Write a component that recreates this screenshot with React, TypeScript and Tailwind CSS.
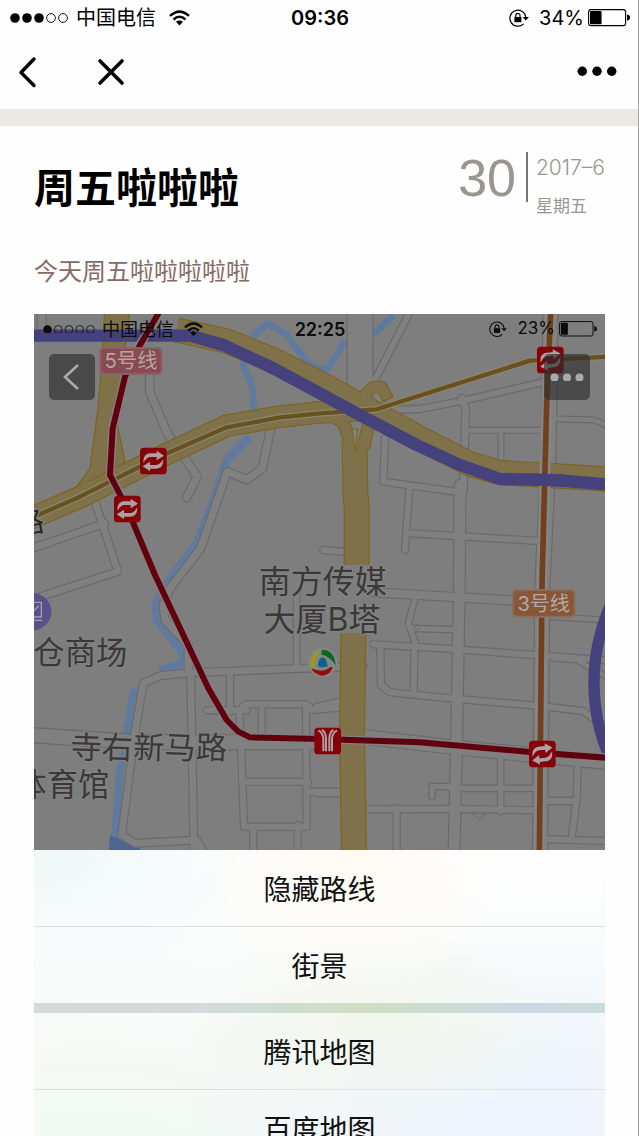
import React from "react";

const streets: [string, number][] = [
  ["M35 0V90", 28],
  ["M359 190V260L412 385L502 515L470 578", 26],
  ["M722 370L697 490L650 524L592 500L512 730L420 850L400 900L405 945L475 1020V1100", 26],
  ["M195 590L218 660L262 795M0 732L225 655M0 885L262 800", 24],
  ["M990 0V300", 78],
  ["M1140 20L1035 225", 22],
  ["M0 1290L300 1310L500 1312L870 1312", 46],
  ["M482 1100L492 1640", 24],
  ["M1000 1085L870 1088L480 1103L390 1112L340 1135L312 1300L275 1590L315 1615L500 1605L520 1640", 24],
  ["M600 1105V1220M530 1216H650M632 1290L628 1220L645 1198H830L845 1215L930 1208", 22],
  ["M695 1205V1290M828 1200L830 1560M632 1290L642 1565H830M635 1430H835M670 1570V1640M803 1560V1640M830 1460H930", 22],
  ["M800 870V1085", 20],
  ["M1300 560L1307 310L1296 280", 24],
  ["M1290 540L1288 840L1280 1300L1272 1640", 36],
  ["M1562 0L1555 470L1537 840L1530 1640", 46],
  ["M1060 315L1170 312L1300 287L1535 232", 22],
  ["M1310 376H1540M1413 380V470M1570 341L1690 345L1730 360", 18],
  ["M1065 400L1060 530L1290 562M1138 550L1125 735M1140 685L1530 708M880 735L940 740", 22],
  ["M1030 862L1540 892", 28],
  ["M1030 1018L1265 1032L1730 1066", 22],
  ["M1051 1025L1053 1140L1080 1162L1260 1180L1530 1203L1660 1218L1710 1255M1153 1040L1151 1165", 22],
  ["M1155 880L1135 955L1160 1025M1140 970L1280 974", 20],
  ["M1560 935L1730 945M1570 1060L1640 1065L1730 1115", 18],
  ["M1000 1295L1270 1327L1730 1372", 44],
  ["M1412 1350V1520M1260 1450H1530M1260 1445H1206V1475", 20],
  ["M1000 1513L1290 1512L1520 1516M1100 1510V1640", 22],
  ["M1643 1370L1640 1480L1625 1600M1540 1488H1640M1540 1602L1730 1608", 22],
  ["M860 1206L935 1188M860 1465H930", 22],
];

const yellow: [string, number][] = [
  ["M-10 645L150 577L400 452L590 362L750 335L870 322L1040 312", 64],
  ["M440 75L590 108L730 165L870 235L1010 312L1160 395L1320 477L1410 503L1740 522", 72],
  ["M974 410L976 560L980 610V780M970 985L966 1290L972 1650", 74],
  ["M890 325L940 350L966 430M1018 350L1000 430", 36],
];

const areaPoly = "M225 0L215 180L205 300L180 490L140 545L60 580L150 610L285 470L262 360L268 290L300 0Z";

function Transfer({ x, y, tilt = 0 }: { x: number; y: number; tilt?: number }) {
  return (
    <g transform={`translate(${x} ${y})`}>
      <rect x="-40" y="-40" width="80" height="80" rx="11" fill="#860208" />
      <g fill="#aaa2a2" transform={`rotate(${tilt})`}>
        <path d="M-30 5C-30 -15 -22 -23 -8 -23H10V-31L32 -16L10 -2V-12H-8C-17 -12 -22 -6 -30 5Z" />
        <path d="M30 -5C30 15 22 23 8 23H-10V31L-32 16L-10 2V12H8C17 12 22 6 30 -5Z" />
      </g>
    </g>
  );
}

function CityMap() {
  return (
    <svg
      viewBox="12 27 1713 1608"
      className="block w-full font-['Inter','Noto_Sans_CJK_SC',sans-serif]"
      role="img"
      aria-label="地图"
    >
      <rect x="0" y="0" width="1740" height="1650" fill="#7e7e7e" />
      <g fill="none" stroke="#5f7a9e" strokeLinejoin="round">
        <path strokeWidth="20" d="M880 200L830 170L770 88L712 56L680 82L650 135L640 180L668 250L672 330M870 192L895 190L945 108M1030 88L1090 30" />
        <path strokeWidth="24" d="M660 395L590 465L560 560L500 715L410 835L376 900L380 945L455 1040L460 1075L390 1095" />
        <path strokeWidth="22" d="M312 1150L288 1290L270 1400L250 1640" />
      </g>
      <path d="M240 1590L330 1630V1650H235Z" fill="#4d6690" />
      <g fill="none" strokeLinejoin="round" strokeLinecap="round">
        {streets.map(([d, w]) => (
          <path key={d} d={d} stroke="#6a6a6d" strokeWidth={w + 3} />
        ))}
        {streets.map(([d, w]) => (
          <path key={d} d={d} stroke="#808080" strokeWidth={w - 4} />
        ))}
      </g>
      <path
        d="M1162 957L1170 967L1162 977L1154 967ZM1325 1528H1338Q1341 1545 1350 1545Q1357 1540 1360 1528H1372"
        fill="none"
        stroke="#6b6b6e"
        strokeWidth="3"
      />

      <path d={areaPoly} fill="#7f724a" stroke="#7d651b" strokeWidth="4" />
      <g fill="none" strokeLinejoin="round">
        {yellow.map(([d, w]) => (
          <path key={d} d={d} stroke="#7d651b" strokeWidth={w + 4} />
        ))}
        <path d="M1005 300L1008 265L1030 245H1055L1075 285" stroke="#7d651b" strokeWidth="36" />
        {yellow.map(([d, w]) => (
          <path key={d} d={d} stroke="#7f724a" strokeWidth={w - 3} />
        ))}
        <path d="M1005 305L1008 265L1030 245H1055L1073 281" stroke="#7f724a" strokeWidth="29" />
        <path d="M230 0L220 180L210 300L188 490L160 545" stroke="#7f724a" strokeWidth="6" />
      </g>
      <path d="M966 372L983 372L976 440Z" fill="#818181" stroke="#7d651b" strokeWidth="3" />
      <g fill="none" strokeLinejoin="round">
        <path d="M-10 645L150 575L400 450L590 367L750 337L870 325L1040 313L1080 300L1500 167L1740 155" stroke="#8c866b" strokeWidth="20" />
        <path d="M-10 645L150 575L400 450L590 367L750 337L870 325L1040 313L1080 300L1500 167L1740 155" stroke="#67521f" strokeWidth="13" />
        <path d="M0 92H480L580 120L730 190L870 265L980 325L1160 420L1290 480L1410 522L1570 525L1740 539" stroke="#44417c" strokeWidth="37" />
        <path d="M1750 880Q1690 1010 1692 1140Q1694 1270 1750 1380" stroke="#44417c" strokeWidth="34" />
        <path d="M1562 0L1550 300L1536 840L1528 1650" stroke="#858585" strokeWidth="32" />
        <path d="M1563 0L1550 300L1536 840L1528 1650" stroke="#71401f" strokeWidth="17" />
        <path d="M1510 524L1600 526" stroke="#44417c" strokeWidth="37" />
        <path d="M400 0L330 120L285 215L248 370L240 510L292 612L375 810L535 1150L590 1245L625 1280L660 1297L870 1302L1170 1312L1510 1342L1740 1359" stroke="#858080" strokeWidth="26" />
        <path d="M400 0L330 120L285 215L248 370L240 510L292 612L375 810L535 1150L590 1245L625 1280L660 1297L870 1302L1170 1312L1510 1342L1740 1359" stroke="#60000f" strokeWidth="18" />
      </g>

      <Transfer x={370} y={468} />
      <Transfer x={292} y={612} />
      <Transfer x={1561} y={165} tilt={-6} />
      <Transfer x={1537} y={1347} tilt={-6} />
      <g transform="translate(893 1308)">
        <rect x="-40" y="-40" width="80" height="80" rx="11" fill="#860208" />
        <path
          d="M-28 -31Q-16 -27 -13 -8V31M-17 -33Q-6 -27 -5 -8V31M28 -31Q16 -27 13 -8V31M17 -33Q6 -27 5 -8V31"
          fill="none"
          stroke="#aaa2a2"
          strokeWidth="6"
        />
      </g>

      <rect x="211" y="129" width="184" height="78" rx="12" fill="#8a4a52" stroke="#8b6166" strokeWidth="6" />
      <text x="303" y="190" fontSize="61" textAnchor="middle" fill="#b5a5a7">5号线</text>
      <rect x="1448" y="855" width="186" height="80" rx="12" fill="#87573a" stroke="#8c6d5a" strokeWidth="6" />
      <text x="1541" y="917" fontSize="60" textAnchor="middle" fill="#b3a9a2">3号线</text>

      <circle cx="8" cy="920" r="56" fill="#59508c" />
      <path d="M0 892H34V936H0M0 946H36M12 918L26 902" fill="none" stroke="#a19fad" strokeWidth="4" />

      <g fill="#3b3937" stroke="#828282" strokeWidth="8" paintOrder="stroke" strokeLinejoin="round">
        <text x="878" y="863" fontSize="96" textAnchor="middle">南方传媒</text>
        <text x="876" y="977" fontSize="96" textAnchor="middle">大厦B塔</text>
        <text x="10" y="1076" fontSize="94">仓商场</text>
        <text x="-44" y="1472" fontSize="94">体育馆</text>
        <text x="120" y="1360" fontSize="94" rotate="2">寺右新马路</text>
        <text x="-42" y="692" fontSize="90" fill="#2a2822" rotate="-10">路</text>
      </g>

      <g transform="translate(878 1072)" fill="none">
        <circle r="44" fill="#858585" />
        <path d="M-8 -36Q-34 -28 -36 2Q-36 16 -26 24Q-26 -10 -8 -36Z" fill="#a09a12" />
        <path d="M-2 -38Q36 -38 39 10Q24 -16 -4 -24Z" fill="#056b22" />
        <path d="M-34 18Q0 34 24 14H30Q22 40 -2 40Q-24 38 -34 18Z" fill="#98090c" />
        <path d="M-14 12Q-14 -12 0 -15Q12 -14 15 12Q0 18 -14 12Z" fill="#086588" />
      </g>
    </svg>
  );
}

function Wifi({ className }: { className: string }) {
  return (
    <svg viewBox="0 0 22 17" className={className} aria-hidden="true">
      <g fill="none" stroke="currentColor" strokeWidth="2.7">
        <path d="M1 6.2Q11 -2.8 21 6.2" />
        <path d="M4.7 9.9Q11 4.3 17.3 9.9" />
      </g>
      <path d="M7.3 12.4Q11 9.5 14.7 12.4L11 16.2Z" fill="currentColor" />
    </svg>
  );
}

function RotationLock({ className }: { className: string }) {
  return (
    <svg viewBox="0 0 20 18" className={className} fill="none" stroke="currentColor" aria-hidden="true">
      <path d="M14.6 14.8A8 8 0 1 1 16.8 8" strokeWidth="1.2" />
      <path d="M13.6 8H20L16.8 11.4Z" fill="currentColor" stroke="none" />
      <rect x="5.4" y="8" width="7" height="5.2" fill="currentColor" stroke="none" />
      <path d="M6.8 8V6.4A2.1 2.1 0 0 1 11 6.4V8" strokeWidth="1.2" />
    </svg>
  );
}

function Battery({ className, level }: { className: string; level: number }) {
  return (
    <svg viewBox="0 0 42 18" className={className} aria-hidden="true">
      <rect x="0.6" y="0.6" width="37" height="16" rx="2.4" fill="none" stroke="currentColor" strokeWidth="1.1" />
      <rect x="2" y="2" width={34 * level} height="13.2" rx="0.8" fill="currentColor" />
      <path d="M39 5.6Q42 6 42 8.6Q42 11.4 39 11.8Z" fill="currentColor" />
    </svg>
  );
}

function Signal({ filled, className }: { filled: number; className: string }) {
  return (
    <svg viewBox="0 0 58 10" className={className} aria-hidden="true">
      {[0, 1, 2, 3, 4].map((i) => (
        <circle
          key={i}
          cx={5 + i * 12}
          cy="5"
          r={i < filled ? 4.8 : 4.4}
          fill={i < filled ? "currentColor" : "none"}
          stroke="currentColor"
          strokeWidth={i < filled ? 0 : 0.9}
        />
      ))}
    </svg>
  );
}

function Dots({ className }: { className: string }) {
  return (
    <svg viewBox="0 0 38 10" className={className} fill="currentColor" aria-hidden="true">
      <circle cx="5" cy="5" r="4.5" />
      <circle cx="19" cy="5" r="4.5" />
      <circle cx="33" cy="5" r="4.5" />
    </svg>
  );
}

function Choice({ children }: { children: React.ReactNode }) {
  return (
    <button className="block h-[76px] w-full pt-1 text-center text-[28px] leading-[72px] text-[#111]">{children}</button>
  );
}

export default function App() {
  return (
    <div className="h-screen overflow-hidden border-r border-[#a0a0a0] bg-[#fefefe] font-['Inter','Noto_Sans_CJK_SC',sans-serif] text-black">
      <div className="grid h-9 grid-cols-[1fr_auto_1fr] items-center pr-2 pl-[10px] text-[20px]">
        <div className="flex items-center">
          <Signal filled={3} className="w-[58px]" />
          <span className="ml-2">中国电信</span>
          <Wifi className="ml-[13px] w-[21px]" />
        </div>
        <span className="font-semibold">09:36</span>
        <div className="flex items-center justify-end">
          <RotationLock className="w-5" />
          <span className="ml-[10px]">34%</span>
          <Battery level={0.34} className="ml-1 w-[42px]" />
        </div>
      </div>
      <nav className="flex h-[73px] items-center pr-[21px] pb-[2px] pl-[18px]">
        <button aria-label="返回">
          <svg viewBox="0 0 20 32" className="w-5" fill="none" stroke="currentColor" strokeWidth="3.4" strokeLinecap="round" strokeLinejoin="round">
            <path d="M16 3L3 16.5L16 29.5" />
          </svg>
        </button>
        <button aria-label="关闭" className="ml-[59px]">
          <svg viewBox="0 0 28 28" className="w-7" fill="none" stroke="currentColor" strokeWidth="3.6" strokeLinecap="round">
            <path d="M3 3L25 25M25 3L3 25" />
          </svg>
        </button>
        <button aria-label="更多" className="ml-auto">
          <Dots className="w-10" />
        </button>
      </nav>
      <div className="h-[17px] bg-[#ede8e2]" />

      <article className="pr-[33px] pl-[34px]">
        <header className="flex h-[120px] justify-between pt-[26px]">
          <h1 className="pt-[6px] text-[41px] leading-[60px] font-bold">周五啦啦啦</h1>
          <div className="flex text-[#9a968f]">
            <span className="pr-[10px] font-['Liberation_Sans',sans-serif] text-[52px] leading-[52px]">30</span>
            <span className="h-[50px] border-l-2 border-[#77736e]" />
            <div className="pl-2">
              <p className="text-[21px] leading-[32px] font-light">2017–6</p>
              <p className="pt-2 text-[17px] leading-[28px]">星期五</p>
            </div>
          </div>
        </header>
        <p className="h-[68px] pt-2 text-[24px] leading-[36px] text-[#856a66]">今天周五啦啦啦啦啦</p>

        <section className="relative">
          <CityMap />
          <div className="absolute inset-x-0 top-0 text-[#0c0c0c]">
            <div className="grid h-[30px] grid-cols-[1fr_auto_1fr] items-center pr-2 pl-[9px] text-[18px]">
              <div className="flex items-center">
                <Signal filled={1} className="w-[52px]" />
                <span className="ml-[7px]">中国电信</span>
                <Wifi className="ml-[10px] w-[19px]" />
              </div>
              <span className="font-semibold">22:25</span>
              <div className="flex items-center justify-end">
                <RotationLock className="w-[18px]" />
                <span className="ml-[10px] text-[17px]">23%</span>
                <Battery level={0.23} className="ml-1 w-[38px]" />
              </div>
            </div>
            <div className="flex justify-between px-[15px] pt-[10px]">
              <button aria-label="返回" className="flex size-[46px] items-center justify-center rounded-[5px] bg-[#494949] text-[#aaa]">
                <svg viewBox="0 0 18 28" className="w-[18px]" fill="none" stroke="currentColor" strokeWidth="2.6">
                  <path d="M15 2L2 14L15 26" />
                </svg>
              </button>
              <button aria-label="更多" className="flex size-[46px] items-center justify-center rounded-[5px] bg-[#2e2e2e]/65 text-[#aaa]">
                <Dots className="w-[34px]" />
              </button>
            </div>
          </div>

          <div className="bg-[radial-gradient(ellipse_at_0%_0%,#eff9f8_0%,transparent_30%),radial-gradient(ellipse_at_55%_0%,#fffbf3_0%,transparent_35%),radial-gradient(ellipse_at_60%_55%,#f2f7ec_0%,transparent_40%),radial-gradient(ellipse_at_90%_85%,#edf4fc_0%,transparent_50%),radial-gradient(ellipse_at_10%_100%,#f3faf3_0%,transparent_50%),linear-gradient(#fdfdfd,#f4f8f9)]">
            <div className="border-b border-[#dce1e2]">
              <Choice>隐藏路线</Choice>
            </div>
            <Choice>街景</Choice>
            <div className="h-[10px] bg-[linear-gradient(90deg,#d6d8d7_0%,#d3d9dc_30%,#cbddd1_42%,#d1dfc3_57%,#c9dcd0_70%,#c9d8e5_86%,#c9dcd7_100%)]" />
            <div className="border-b border-[#dce1e2]">
              <Choice>腾讯地图</Choice>
            </div>
            <Choice>百度地图</Choice>
          </div>
        </section>
      </article>
    </div>
  );
}
